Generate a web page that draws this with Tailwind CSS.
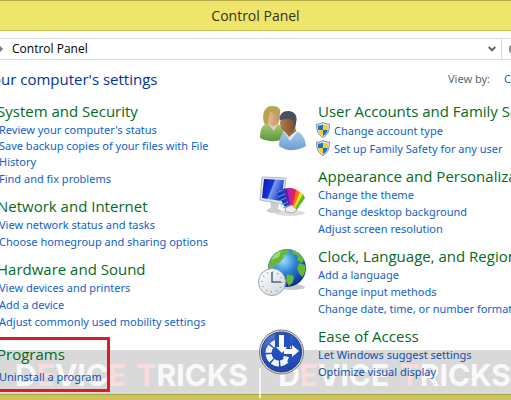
<!DOCTYPE html>
<html lang="en">

<head>
    <meta charset="UTF-8">
    <meta name="viewport" content="width=device-width, initial-scale=1.0">
    <title>Control Panel</title>
    <script src="https://cdn.jsdelivr.net/npm/@tailwindcss/browser@4"></script>
</head>

<body class="relative min-h-screen flex flex-col overflow-hidden bg-white font-['Noto_Sans','Open_Sans',sans-serif] text-[11px] text-[#0f5fcd]">
    <header class="h-[31px] shrink-0 flex items-center justify-center bg-[#f0e56b] border-t border-b border-t-[#b5ac50] border-b-[#cabf55]">
        <h1 class="font-['Open_Sans',sans-serif] text-[14px] text-[#333322]">Control Panel</h1>
    </header>

    <!-- address bar -->
    <nav class="mt-[7px] h-[22px] shrink-0 flex items-stretch border-y border-[#d9d9d9] text-black">
        <svg class="w-1 h-2 self-center" viewBox="0 0 4 8" fill="#777"><path d="M0 1l3 3-3 3z" /></svg>
        <a href="#" class="ml-2 self-center font-['Open_Sans',sans-serif] text-[12px] leading-5">Control Panel</a>
        <button class="ml-auto w-[18px] flex items-center justify-center" aria-label="Previous locations">
            <svg class="w-2 h-2" viewBox="0 0 8 8" fill="none" stroke="#666" stroke-width="2"><path d="M.7 2l3.300 3.300L7.300 2" /></svg>
        </button>
        <button class="w-[10px] border-l border-[#d9d9d9] flex items-center justify-end overflow-hidden" aria-label="Refresh">
            <svg class="w-[2px] h-2" viewBox="0 0 2 8" fill="#888"><path d="M2 0C0 1 0 2 0 4s0 3 2 4z" /></svg>
        </button>
    </nav>

    <div class="mt-[9px] h-[20px] shrink-0 flex items-center overflow-hidden">
        <h2 class="-ml-2 font-['Open_Sans',sans-serif] text-[15px] leading-5 text-[#003399]">our computer's settings</h2>
        <span class="ml-auto text-[#5c6673]">View by:</span>
        <a href="#" class="ml-[14px] w-[7px] overflow-hidden">Category</a>
    </div>

    <main class="relative z-10 mt-3 flex overflow-hidden whitespace-nowrap leading-[17px]">
        <div class="w-[258px] shrink-0 flex flex-col gap-[9px]">
            <section class="-ml-px flex flex-col items-start">
                <h3 class="-ml-[2px] font-['Open_Sans',sans-serif] text-[15px] leading-5 text-[#046b1c]"><a href="#">System and Security</a></h3>
                <a href="#">Review your computer's status</a>
                <a href="#" class="leading-4">Save backup copies of your files with File<br>History</a>
                <a href="#">Find and fix problems</a>
            </section>
            <section class="-ml-px flex flex-col items-start">
                <h3 class="-ml-[2px] font-['Open_Sans',sans-serif] text-[15px] leading-5 text-[#046b1c]"><a href="#">Network and Internet</a></h3>
                <a href="#">View network status and tasks</a>
                <a href="#">Choose homegroup and sharing options</a>
            </section>
            <section class="-ml-px flex flex-col items-start">
                <h3 class="-ml-[2px] font-['Open_Sans',sans-serif] text-[15px] leading-5 text-[#046b1c]"><a href="#">Hardware and Sound</a></h3>
                <a href="#">View devices and printers</a>
                <a href="#">Add a device</a>
                <a href="#">Adjust commonly used mobility settings</a>
            </section>
            <section class="-ml-px -mt-[2px] w-[111px] py-1 flex flex-col items-start gap-1 border-y-3 border-r-3 border-[#e01b23]">
                <h3 class="-ml-[2px] font-['Open_Sans',sans-serif] text-[15px] leading-5 text-[#046b1c]"><a href="#">Programs</a></h3>
                <a href="#" class="text-[#0d51ae]">Uninstall a program</a>
            </section>
        </div>

        <div class="min-w-0 flex-1 flex flex-col gap-[9px]">
            <section class="flex gap-3">
                <svg class="-mb-2 mt-[3px] w-12 h-12 shrink-0" viewBox="0 0 48 48">
                    <defs>
                        <linearGradient id="green" x2="0" y2="1"><stop stop-color="#a9cf76" /><stop offset="1" stop-color="#5d943b" /></linearGradient>
                        <linearGradient id="blue" x2="0" y2="1"><stop stop-color="#a9cbee" /><stop offset="1" stop-color="#6c9ed0" /></linearGradient>
                        <linearGradient id="skin"><stop stop-color="#e8c49b" /><stop offset="1" stop-color="#c29063" /></linearGradient>
                        <linearGradient id="tan"><stop stop-color="#b67b4e" /><stop offset="1" stop-color="#76492d" /></linearGradient>
                    </defs>
                    <path d="M2 34c0-11 3-15 12-15s12 5 12 16c-7 3-17 3-24-1z" fill="url(#green)" />
                    <path d="M10 20l6 7 4-7z" fill="#e9cfae" />
                    <ellipse cx="15" cy="13" rx="7" ry="9" fill="url(#skin)" />
                    <path d="M6 19C3 8 8 2 14 2c7 0 9 3 8 8-4 0-6-1-9-2-2 1-2 6-3 12-2 1-3 0-4-1z" fill="#b9a353" />
                    <path d="M21 42c0-10 4-15 13-15s13 6 14 15c-8 5-19 6-27 0z" fill="url(#blue)" />
                    <path d="M26 27l6 10 7-9z" fill="#dfeaf4" />
                    <path d="M25 25l6 8 7-6-1-4z" fill="#9c683f" />
                    <ellipse cx="30" cy="19" rx="8" ry="10" fill="url(#tan)" />
                    <path d="M22 16c-1-6 3-9 8-9 7 0 10 5 8 12l-2 4c0-6-1-7-4-8-3 0-6 0-10 1z" fill="#48515a" />
                </svg>
                <div class="flex flex-col items-start">
                    <h3 class="font-['Open_Sans',sans-serif] text-[15px] leading-5 text-[#046b1c]"><a href="#">User Accounts and Family Safety</a></h3>
                    <a href="#" class="-ml-[2px] h-[18px] flex items-center gap-1">
                        <svg class="w-[14px] h-4" viewBox="0 0 14 16">
                            <path d="M7 .5c2 1.200 4 1.600 6.300 1.500C13.800 8 12 13 7 15.500 2 13 .2 8 .7 2 3 2.100 5 1.700 7 .5z" fill="#e4e8ea" stroke="#858b8f" />
                            <path d="M7 2.500V8H2.200C1.900 6.500 1.900 5 2 3.500 4 3.500 5.500 3.200 7 2.500zM7 8h4.800C11 11 9.500 12.800 7 14z" fill="#1773d2" />
                            <path d="M7 2.500c1.500.7 3 1 5 1 .1 1.500.1 3-.2 4.500H7zM7 8v6C4.500 12.800 3 11 2.200 8z" fill="#fdce1f" />
                        </svg>
                        Change account type
                    </a>
                    <a href="#" class="-ml-[2px] h-[18px] flex items-center gap-1">
                        <svg class="w-[14px] h-4" viewBox="0 0 14 16">
                            <path d="M7 .5c2 1.200 4 1.600 6.300 1.500C13.800 8 12 13 7 15.500 2 13 .2 8 .7 2 3 2.100 5 1.700 7 .5z" fill="#e4e8ea" stroke="#858b8f" />
                            <path d="M7 2.500V8H2.200C1.900 6.500 1.900 5 2 3.500 4 3.500 5.500 3.200 7 2.500zM7 8h4.800C11 11 9.500 12.800 7 14z" fill="#1773d2" />
                            <path d="M7 2.500c1.500.7 3 1 5 1 .1 1.500.1 3-.2 4.500H7zM7 8v6C4.500 12.800 3 11 2.200 8z" fill="#fdce1f" />
                        </svg>
                        Set up Family Safety for any user
                    </a>
                </div>
            </section>

            <section class="flex gap-3">
                <svg class="mt-2 w-12 h-12 shrink-0" viewBox="0 0 48 48">
                    <defs>
                        <linearGradient id="screen" x2="1" y2=".4"><stop stop-color="#0717a5" /><stop offset=".5" stop-color="#1637d8" /><stop offset=".55" stop-color="#7f9dec" /><stop offset="1" stop-color="#173ac8" /></linearGradient>
                    </defs>
                    <ellipse cx="32" cy="39" rx="15" ry="3" fill="#ddd" />
                    <path d="M12 27l9 3-1 5c4 1 5 4-1 4-8 0-11-1-10-3 0-1 3-1 4-3z" fill="#c9ced2" />
                    <path d="M4 3l24 1-3 26-23-4z" fill="#e1e4e6" stroke="#b4b8bb" />
                    <path d="M6 5l20 1-3 21-19-3z" fill="url(#screen)" />
                    <path d="M18 18l8-3 8 21-4 2z" fill="#123cb4" />
                    <path d="M24 15l6-1 4 22-3 1z" fill="#5527a8" />
                    <path d="M29 14l5 0 1 22-2 1z" fill="#b823b4" />
                    <path d="M34 14l5 2-3 20-2-1z" fill="#ec1c50" />
                    <path d="M38 16l4 2-6 18-2-1z" fill="#f6721c" />
                    <path d="M42 18l3 2-8 16-2-1z" fill="#f3df1e" />
                    <path d="M45 20l2 4-9 13-2-1z" fill="#55bd29" />
                    <path d="M18 19l7-3M20 23l7-3M21 27l7-3M23 31l7-3M25 34l6-3" stroke="#6e95ec" />
                    <path d="M27 34l7-3 5 5-4 3-7-1z" fill="#eee" stroke="#aaa" />
                </svg>
                <div class="flex flex-col items-start">
                    <h3 class="font-['Open_Sans',sans-serif] text-[15px] leading-5 text-[#046b1c]"><a href="#">Appearance and Personalization</a></h3>
                    <a href="#">Change the theme</a>
                    <a href="#">Change desktop background</a>
                    <a href="#">Adjust screen resolution</a>
                </div>
            </section>

            <section class="flex gap-3">
                <svg class="mt-[3px] w-12 h-12 shrink-0" viewBox="0 0 48 48">
                    <defs>
                        <radialGradient id="sea" cx=".4" cy=".3" r=".7"><stop stop-color="#9be2fb" /><stop offset=".45" stop-color="#2f86d6" /><stop offset="1" stop-color="#0b3190" /></radialGradient>
                        <linearGradient id="dial" x2="1" y2="1"><stop stop-color="#ffffff" /><stop offset="1" stop-color="#cfd6dc" /></linearGradient>
                    </defs>
                    <ellipse cx="34" cy="38" rx="13" ry="3" fill="#c9c9c9" />
                    <circle cx="29" cy="19" r="19" fill="url(#sea)" />
                    <path d="M12 12c3-7 9-11 16-12l4 2-3 3-4 1 1 3-5 5-3 1-3 5-5-1zM33 1c6 1 11 5 13 10l-2 3-5-3 1-4-5-2zM41 14l6 2c1 5 0 9-3 12l-3-4-2-5zM29 25l7 2-1 6-4 4-3-5z" fill="#64b93a" />
                    <path d="M13 11c2-5 6-8 10-9l-2 6z" fill="#a1d960" />
                    <circle cx="14" cy="33" r="13.500" fill="url(#dial)" stroke="#9aa5ad" />
                    <circle cx="14" cy="33" r="10" fill="none" stroke="#8b969e" stroke-width="1.500" stroke-dasharray="1 4.236" />
                    <path d="M14 23v10h9" fill="none" stroke="#4c6578" stroke-width="1.500" />
                </svg>
                <div class="flex flex-col items-start">
                    <h3 class="font-['Open_Sans',sans-serif] text-[15px] leading-5 text-[#046b1c]"><a href="#">Clock, Language, and Region</a></h3>
                    <a href="#">Add a language</a>
                    <a href="#">Change input methods</a>
                    <a href="#">Change date, time, or number formats</a>
                </div>
            </section>

            <section class="flex gap-3">
                <svg class="mt-[3px] w-12 h-12 shrink-0" viewBox="0 0 48 48">
                    <defs>
                        <linearGradient id="access" x2=".4" y2="1"><stop stop-color="#6a8be0" /><stop offset=".5" stop-color="#2450c0" /><stop offset="1" stop-color="#2147ae" /></linearGradient>
                    </defs>
                    <circle cx="23.500" cy="23" r="22" fill="#d8dbe0" stroke="#77797d" />
                    <circle cx="23.500" cy="23" r="20" fill="url(#access)" stroke="#253a78" />
                    <circle cx="21" cy="24" r="10.500" fill="none" stroke="#f2f5fa" stroke-width="6" stroke-dasharray="6.750 1.500" />
                    <path d="M17 4h15v15h10v14H30l-9-9-4-4z" fill="#2450c0" />
                    <path d="M21 6h5v12h3l-5 6-6-6h3z" fill="#fff" />
                    <path d="M26 20h8v-4l7 6-7 6v-3h-8z" fill="#fff" />
                    <path d="M26 27l5 1-2 5-4-4z" fill="#f2f5fa" />
                </svg>
                <div class="flex flex-col items-start">
                    <h3 class="font-['Open_Sans',sans-serif] text-[15px] leading-5 text-[#046b1c]"><a href="#">Ease of Access</a></h3>
                    <a href="#" class="text-[#0d51ae]">Let Windows suggest settings</a>
                    <a href="#" class="text-[#0d51ae]">Optimize visual display</a>
                </div>
            </section>
        </div>
    </main>

    <footer class="mt-[2px] flex-1 min-h-[6px] border-t border-[#c8bd50] bg-[#f0e56b]"></footer>

    <!-- watermark strip along the bottom of the window -->
    <div class="pointer-events-none absolute inset-x-0 bottom-0 h-[50px] flex items-center overflow-hidden whitespace-nowrap bg-black/15 pl-[15px] font-['Inter','Open_Sans',sans-serif] text-[30px] leading-[50px] font-bold text-white/85">
        <span class="w-[123px]">D<span class="text-[#f8dcde]">E</span>VIC<span class="text-[#f8dcde]">E</span></span>
        <span class="w-[124px]"><span class="text-[#f8dcde]">T</span>RICKS</span>
        <span class="mt-4 h-[30px] w-[2px] bg-white/75"></span>
        <span class="ml-[17px] w-[123px]">D<span class="text-[#f8dcde]">E</span>VICE</span>
        <span><span class="text-[#f8dcde]">T</span>RICKS</span>
    </div>
</body>

</html>
